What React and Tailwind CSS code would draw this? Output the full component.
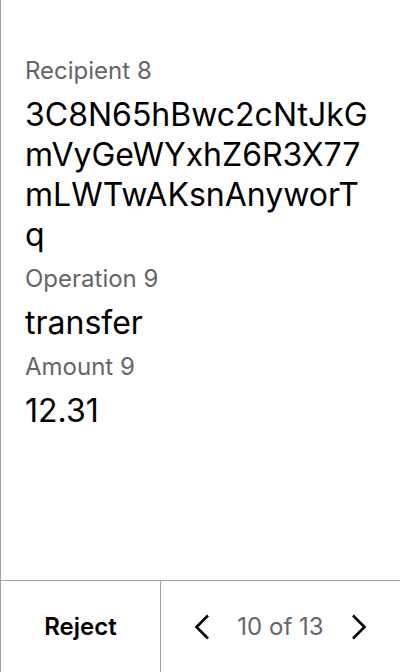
const fields = [
  { label: 'Recipient 8', value: '3C8N65hBwc2cNtJkGmVyGeWYxhZ6R3X77mLWTwAKsnAnyworTq' },
  { label: 'Operation 9', value: 'transfer' },
  { label: 'Amount 9', value: '12.31' },
];

function Chevron({ dir }) {
  return (
    <svg width="16" height="26" viewBox="0 0 16 26" fill="none" stroke="black" strokeWidth={2.6}>
      <path d={dir === 'left' ? 'M14 1.5 L2.5 13 L14 24.5' : 'M2 1.5 L13.5 13 L2 24.5'} />
    </svg>
  );
}

function App() {
  return (
    <div
      className="h-[672px] w-[400px] flex flex-col bg-white border-l border-[#a3a3a3]"
      style={{ fontFamily: 'Inter, "Noto Sans", sans-serif' }}
    >
      <div className="flex-1 px-6 pt-[55px] flex flex-col gap-2">
        {fields.map((f) => (
          <div key={f.label} className="contents">
            <div className="text-[24px] leading-[32px] text-[#666]">{f.label}</div>
            <div className="max-w-[347px] text-[32px] leading-[40px] text-black break-all">{f.value}</div>
          </div>
        ))}
      </div>
      <div className="h-[92px] flex border-t border-[#a3a3a3]">
        <button className="w-[160px] flex items-center justify-center text-[24px] font-semibold text-black border-r border-[#a3a3a3]">
          Reject
        </button>
        <div className="flex-1 flex items-center justify-center gap-[27px]">
          <Chevron dir="left" />
          <span className="text-[24px] text-[#666]">10 of 13</span>
          <Chevron dir="right" />
        </div>
      </div>
    </div>
  );
}

export default App;
